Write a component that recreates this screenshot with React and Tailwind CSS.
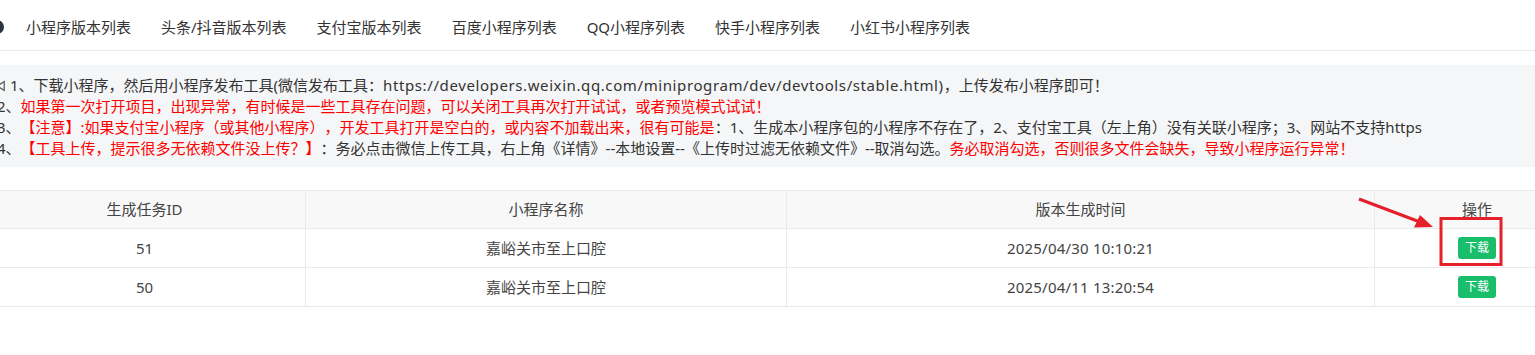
import React from 'react';

const navItems = [
  '小程序版本列表',
  '头条/抖音版本列表',
  '支付宝版本列表',
  '百度小程序列表',
  'QQ小程序列表',
  '快手小程序列表',
  '小红书小程序列表',
];

const rows = [
  { id: 51, name: '嘉峪关市至上口腔', time: '2025/04/30 10:10:21' },
  { id: 50, name: '嘉峪关市至上口腔', time: '2025/04/11 13:20:54' },
];

const cols = 'grid grid-cols-[322px_481px_588px_204px]';

// only the cone of the speaker is on screen, the rest is cut off at the left edge
const NoticeIcon = () => (
  <svg viewBox="0 0 16 16" className="w-[16px] h-[16px] shrink-0" fill="none" stroke="#555" strokeWidth="1.2">
    <path d="M3.2 8L10.2 3.6V12.4Z" />
  </svg>
);

const Notice = () => (
  <div className="mt-[14px] bg-[#f5f6f7] pt-[10px] pb-[8px] pl-[13px] text-[15px] leading-[21px] text-[#333] [text-spacing-trim:space-all] whitespace-nowrap">
    <div className="flex items-center -ml-[3px]">
      <NoticeIcon />
      <span>1、下载小程序，然后用小程序发布工具(微信发布工具：<span className="tracking-[0.6px]">https://developers.weixin.qq.com/miniprogram/dev/devtools/stable.html)</span>，上传发布小程序即可！</span>
    </div>
    <div>
      2、<span className="text-[#f00]">如果第一次打开项目，出现异常，有时候是一些工具存在问题，可以关闭工具再次打开试试，或者预览模式试试！</span>
    </div>
    <div>
      3、<span className="text-[#f00]">【注意】:如果支付宝小程序（或其他小程序），开发工具打开是空白的，或内容不加载出来，很有可能是</span>：1、生成本小程序包的小程序不存在了，2、支付宝工具（左上角）没有关联小程序；3、网站不支持https
    </div>
    <div>
      4、<span className="text-[#f00]">【工具上传，提示很多无依赖文件没上传？】</span>：务必点击微信上传工具，右上角《详情》--本地设置--《上传时过滤无依赖文件》--取消勾选。<span className="text-[#f00]">务必取消勾选，否则很多文件会缺失，导致小程序运行异常！</span>
    </div>
  </div>
);

const VersionTable = () => (
  <div className="mt-[23px] border-t border-[#e8eaec] text-[15px] text-[#444]">
    <div className={`${cols} h-[38px] bg-[#f8f8f9] border-b border-[#e8eaec]`}>
      <div className="flex items-center justify-center border-r border-[#e8eaec]">生成任务ID</div>
      <div className="flex items-center justify-center border-r border-[#e8eaec]">小程序名称</div>
      <div className="flex items-center justify-center border-r border-[#e8eaec]">版本生成时间</div>
      <div className="flex items-center justify-center">操作</div>
    </div>
    {rows.map((r) => (
      <div key={r.id} className={`${cols} h-[39px] border-b border-[#e8eaec]`}>
        <div className="flex items-center justify-center border-r border-[#e8eaec]">{r.id}</div>
        <div className="flex items-center justify-center border-r border-[#e8eaec]">{r.name}</div>
        <div className="flex items-center justify-center border-r border-[#e8eaec] tracking-[0.2px]">{r.time}</div>
        <div className="flex items-center justify-center">
          <button className="h-[22px] px-[7px] rounded-[3px] bg-[#19be6b] text-white text-[12px] leading-[22px]">下载</button>
        </div>
      </div>
    ))}
  </div>
);

export default function App() {
  return (
    <div className="relative w-[1535px] h-[355px] overflow-hidden bg-white font-['Noto_Sans','Noto_Sans_CJK_SC',sans-serif]">
      <div className="-ml-[16px] w-[1595px]">
        <div className="flex items-center h-[51px] border-b border-[#e8eaec] pt-[4px]">
          <div className="ml-[6px] w-[14px] h-[14px] rounded-full bg-[#2d3340] shrink-0" />
          <div className="flex ml-[7px]">
            {navItems.map((t) => (
              <span key={t} className="px-[15px] text-[15px] text-[#333]">{t}</span>
            ))}
          </div>
        </div>
        <Notice />
        <VersionTable />
      </div>
      <svg className="absolute left-0 top-0 pointer-events-none" width="1535" height="355">
        <rect x="1441" y="218.5" width="60" height="46" fill="none" stroke="#e5202a" strokeWidth="3" />
        <line x1="1359" y1="199" x2="1420" y2="222" stroke="#e5202a" strokeWidth="3" />
        <path d="M1433 227L1414 227.5L1420 215z" fill="#e5202a" />
      </svg>
    </div>
  );
}
